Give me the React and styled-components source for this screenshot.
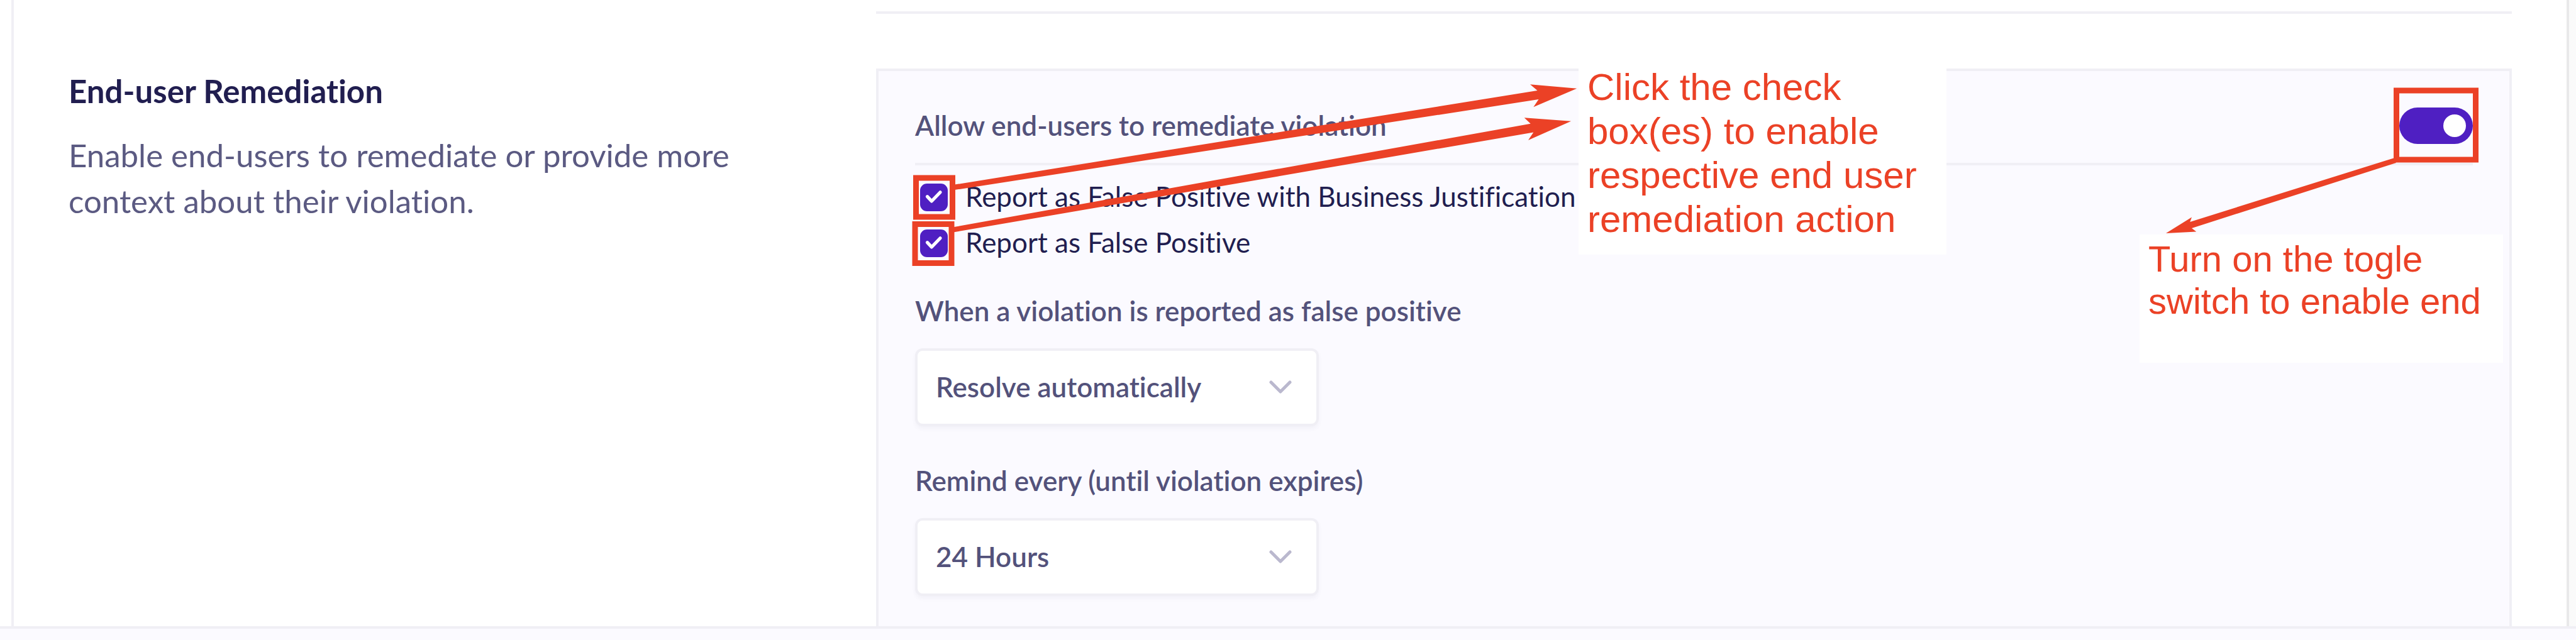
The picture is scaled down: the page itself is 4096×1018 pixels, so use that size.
import React, { useState } from "react";
import styled, { createGlobalStyle } from "styled-components";

const color = {
  ink: "#211e50",
  text: "#5b5a82",
  label: "#53527b",
  line: "#f0eff5",
  edge: "#e9e9ea",
  tint: "#fbfaff",
  brand: "#4f1fc2",
  mark: "#eb4126",
  chevron: "#bab8ce",
};

const GlobalStyle = createGlobalStyle`
  *, *::before, *::after { box-sizing: border-box; }
  body {
    margin: 0;
    background: #fff;
    color: ${color.ink};
    font-family: Lato, "Open Sans", sans-serif;
    font-size: 44px;
    font-variant-ligatures: none;
  }
`;

const Page = styled.div`
  display: flex;
  flex-direction: column;
  min-height: 100vh;
`;

const Body = styled.div`
  flex: 1;
  display: flex;
  padding-left: 18px;
`;

const Gutter = styled.div`
  width: 11px;
  background: #fafafa;
`;

const Content = styled.main`
  flex: 1;
  display: flex;
  flex-direction: column;
  padding: 18px 87px 0;
  border-left: 4px solid ${color.line};
  border-right: 4px solid ${color.edge};
`;

const Section = styled.section`
  display: grid;
  grid-template-columns: minmax(0, 1284fr) minmax(0, 2601fr);
  flex: ${(p) => (p.$fill ? 1 : "none")};
`;

const SectionRule = styled.div`
  grid-column: 2;
  height: 4px;
  margin-bottom: 87px;
  background: ${color.line};
`;

const Intro = styled.header`
  display: flex;
  flex-direction: column;
  gap: 35px;
  padding: 6px 120px 0 0;
`;

const Title = styled.h2`
  margin: 0;
  font-size: 51px;
  line-height: 60px;
  font-weight: 700;
`;

const Description = styled.p`
  margin: 0;
  font-size: 51px;
  line-height: 73px;
  color: ${color.text};
`;

const Panel = styled.div`
  position: relative;
  display: flex;
  flex-direction: column;
  padding: 58px 58px 48px;
  border: 4px solid ${color.line};
  border-bottom: 0;
  background: ${color.tint};
`;

const PanelHeader = styled.div`
  display: flex;
  align-items: center;
  justify-content: space-between;
  padding-bottom: 30px;
  border-bottom: 4px solid ${color.line};
`;

const HeaderLabel = styled.label`
  padding-bottom: 2px;
  line-height: 56px;
  font-weight: 600;
  color: ${color.label};
`;

const Toggle = styled.input`
  appearance: none;
  display: flex;
  align-items: center;
  justify-content: ${(p) => (p.checked ? "flex-end" : "flex-start")};
  width: 117px;
  height: 58px;
  margin: 0;
  padding: 0 11px;
  border-radius: 29px;
  background: ${(p) => (p.checked ? color.brand : color.chevron)};

  &::before {
    content: "";
    width: 36px;
    height: 36px;
    border-radius: 50%;
    background: #fff;
  }
`;

const OptionList = styled.div`
  display: flex;
  flex-direction: column;
  padding: 14px 0 43px;
`;

const Option = styled.div`
  display: flex;
  align-items: center;
  gap: 28px;
  height: 73px;
  padding-left: 8px;
`;

const CheckCell = styled.span`
  display: grid;
  width: 44px;
  height: 44px;

  > * {
    grid-area: 1 / 1;
  }
`;

const CheckInput = styled.input`
  appearance: none;
  width: 44px;
  height: 44px;
  margin: 0;
  border: 4px solid ${color.brand};
  border-radius: 11px;
  background: ${(p) => (p.checked ? color.brand : "#fff")};
`;

const CheckMark = styled.svg`
  width: 44px;
  height: 44px;
  pointer-events: none;
`;

const OptionLabel = styled.label`
  padding-bottom: 4px;
  line-height: 56px;
  white-space: nowrap;
`;

const Field = styled.div`
  display: flex;
  flex-direction: column;
  align-items: flex-start;
  gap: 32px;

  & + & {
    margin-top: 58px;
  }
`;

const FieldLabel = styled.label`
  line-height: 56px;
  font-weight: 600;
  color: ${color.label};
`;

const SelectBox = styled.div`
  position: relative;
  width: 642px;
`;

const Select = styled.select`
  appearance: none;
  display: block;
  width: 100%;
  height: 124px;
  padding: 0 110px 3px 29px;
  border: 4px solid ${color.line};
  border-radius: 12px;
  background: #fff;
  box-shadow: 0 4px 6px rgba(83, 82, 123, 0.05);
  font: inherit;
  font-weight: 600;
  color: ${color.label};
`;

const Chevron = styled.svg`
  position: absolute;
  top: 50px;
  right: 42px;
  width: 38px;
  height: 24px;
  pointer-events: none;
`;

const Footer = styled.footer`
  height: 22px;
  border-top: 4px solid ${color.line};
  background: ${color.tint};
`;

const Markup = styled.svg`
  position: absolute;
  top: 0;
  ${(p) => p.$side}: 0;
  pointer-events: none;
  fill: ${color.mark};

  rect {
    fill: none;
    stroke: ${color.mark};
    stroke-width: 9px;
  }
`;

const Note = styled.p`
  position: absolute;
  margin: 0;
  padding: 5px 14px;
  background: #fff;
  font-family: "Liberation Sans", Arial, sans-serif;
  color: ${color.mark};
`;

const CheckNote = styled(Note)`
  top: -14px;
  left: 1113px;
  width: 585px;
  height: 306px;
  font-size: 60px;
  line-height: 70px;
`;

const ToggleNote = styled(Note)`
  top: 260px;
  right: 10px;
  width: 578px;
  height: 204px;
  font-size: 58px;
  line-height: 67px;
`;

function CheckOption({ id, children }) {
  const [on, setOn] = useState(true);
  return (
    <Option>
      <CheckCell>
        <CheckInput type="checkbox" id={id} checked={on} onChange={() => setOn(!on)} />
        {on && (
          <CheckMark viewBox="0 0 48 48" fill="none" aria-hidden="true">
            <path
              d="M12.5 22.5 20 30.5 35 15"
              stroke="#fff"
              strokeWidth="5.6"
              strokeLinecap="round"
              strokeLinejoin="round"
            />
          </CheckMark>
        )}
      </CheckCell>
      <OptionLabel htmlFor={id}>{children}</OptionLabel>
    </Option>
  );
}

function SelectField({ id, label, options }) {
  return (
    <Field>
      <FieldLabel htmlFor={id}>{label}</FieldLabel>
      <SelectBox>
        <Select id={id}>
          {options.map((o) => (
            <option key={o}>{o}</option>
          ))}
        </Select>
        <Chevron viewBox="0 0 38 24" fill="none" aria-hidden="true">
          <path
            d="M4 4 19 19 34 4"
            stroke={color.chevron}
            strokeWidth="5"
            strokeLinecap="round"
            strokeLinejoin="round"
          />
        </Chevron>
      </SelectBox>
    </Field>
  );
}

export default function App() {
  const [allowed, setAllowed] = useState(true);
  return (
    <>
      <GlobalStyle />
      <Page>
        <Body>
          <Content>
            <Section>
              <SectionRule />
            </Section>
            <Section $fill>
              <Intro>
                <Title>End-user Remediation</Title>
                <Description>
                  Enable end-users to remediate or provide more context about their violation.
                </Description>
              </Intro>
              <Panel>
                <PanelHeader>
                  <HeaderLabel htmlFor="allow">Allow end-users to remediate violation</HeaderLabel>
                  <Toggle
                    type="checkbox"
                    role="switch"
                    id="allow"
                    checked={allowed}
                    onChange={() => setAllowed(!allowed)}
                  />
                </PanelHeader>
                <OptionList>
                  <CheckOption id="justified">
                    Report as False Positive with Business Justification
                  </CheckOption>
                  <CheckOption id="plain">Report as False Positive</CheckOption>
                </OptionList>
                <SelectField
                  id="resolve"
                  label="When a violation is reported as false positive"
                  options={["Resolve automatically"]}
                />
                <SelectField
                  id="remind"
                  label="Remind every (until violation expires)"
                  options={["24 Hours"]}
                />

                <CheckNote>
                  Click the check box(es) to enable respective end user remediation action
                </CheckNote>
                <ToggleNote>Turn on the togle switch to enable end</ToggleNote>
                <Markup $side="left" width="1120" height="320" viewBox="1397 113 1120 320" aria-hidden="true">
                  <rect x="1456.5" y="283" width="58" height="62" />
                  <rect x="1455" y="356.5" width="58" height="62" />
                  <path d="M1518 293.6 2444.5 144 2433 134.3 2507.3 140.7 2438.3 170.2 2446.5 158 1518 302.1Z" />
                  <path d="M1517 361 2433.7 196.7 2423.7 187.2 2498.1 192.7 2430 223.1 2438.3 210.4 1517 369.3Z" />
                </Markup>
                <Markup $side="right" width="600" height="300" viewBox="3390 113 600 300" aria-hidden="true">
                  <rect x="3810.5" y="144" width="126" height="110" />
                  <path d="M3807 251.2 3482.3 352.9 3485 345.6 3444 371.1 3492.3 368.4 3485 362.9 3810 259Z" />
                </Markup>
              </Panel>
            </Section>
          </Content>
          <Gutter />
        </Body>
        <Footer />
      </Page>
    </>
  );
}
